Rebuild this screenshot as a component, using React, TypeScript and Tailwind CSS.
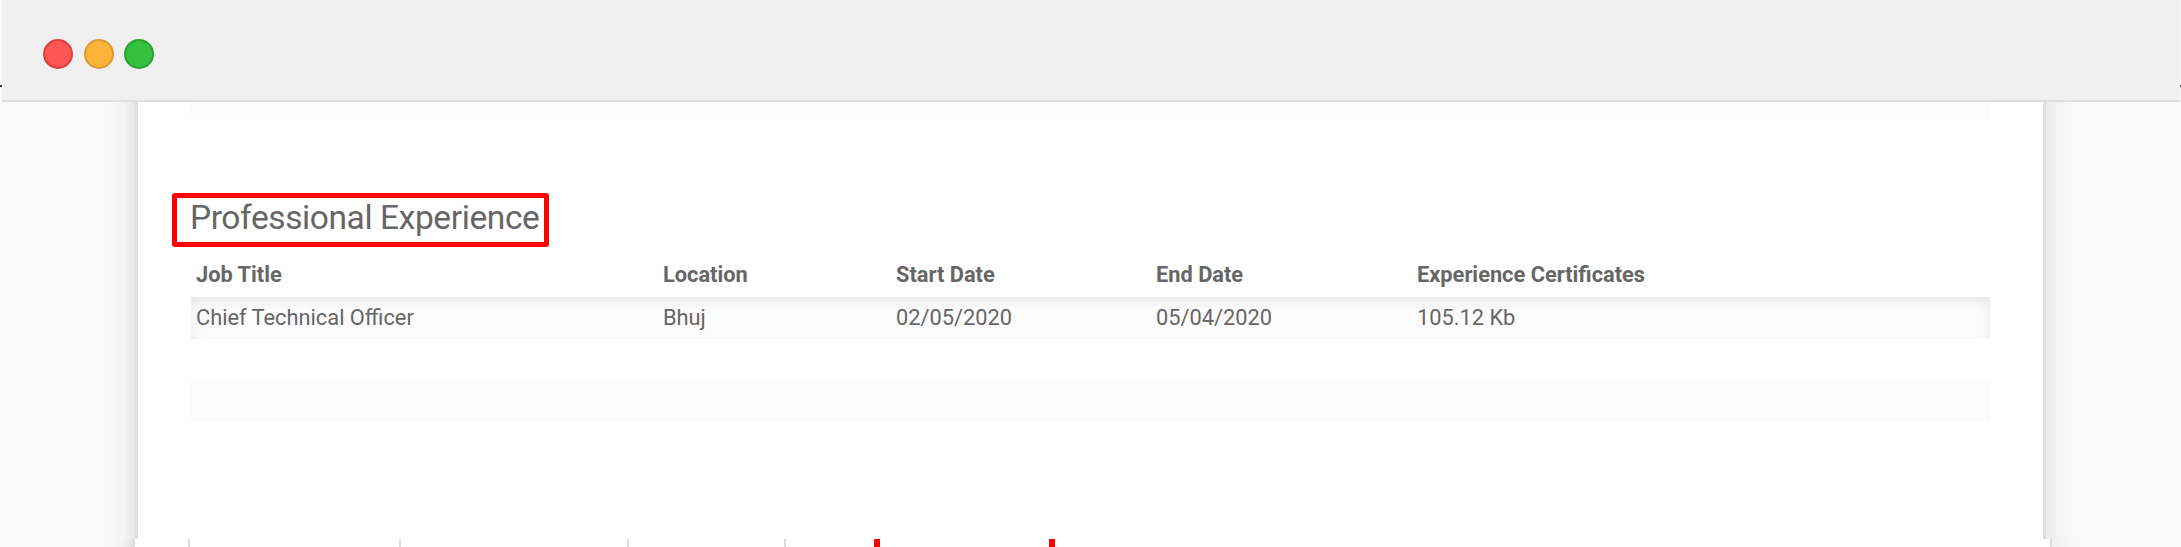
const columns = [
  { title: "Job Title", value: "Chief Technical Officer" },
  { title: "Location", value: "Bhuj" },
  { title: "Start Date", value: "02/05/2020" },
  { title: "End Date", value: "05/04/2020" },
  { title: "Experience Certificates", value: "105.12 Kb" },
];

const grid = "grid grid-cols-[467px_233px_260px_261px_1fr] pl-[5px]";

function WindowBar() {
  return (
    <header className="relative mr-px ml-[2px] flex h-[102px] shrink-0 items-start border-b-2 border-[#dcdede] bg-[#f0f0f0] pt-[39px] pl-[41px]">
      <span className="size-[30px] rounded-full border-2 border-[#e0413f] bg-[#fc5753]" />
      <span className="ml-[11px] size-[30px] rounded-full border-2 border-[#dd9a33] bg-[#fbb437]" />
      <span className="ml-[10px] size-[30px] rounded-full border-2 border-[#27a22b] bg-[#36c041]" />
      <span className="absolute top-[85px] -left-[2px] h-[2px] w-[2px] bg-[#3f2f40]" />
      <span className="absolute top-[85px] -right-px h-[2px] w-px bg-[#555555]" />
    </header>
  );
}

function Experience() {
  return (
    <section className="text-[#666666]">
      <div className="ml-[-19px] flex h-[54px] w-[377px] items-start rounded-[3px] border-[5px] border-[#ff0000] pl-[13px]">
        <h1 className="text-[33.5px] leading-[40px] tracking-[-0.4px] whitespace-nowrap">Professional Experience</h1>
      </div>
      <div className={`${grid} h-[50px] items-center pt-[6px] text-[21.8px] font-bold`}>
        {columns.map((c) => (
          <span key={c.title} className="whitespace-nowrap">{c.title}</span>
        ))}
      </div>
      <div className={`${grid} h-[42px] items-center bg-[#fcfcfc] pt-px text-[21.8px] shadow-[inset_0_5px_14px_-3px_rgba(0,0,0,0.12)]`}>
        {columns.map((c) => (
          <span key={c.title} className="whitespace-nowrap">{c.value}</span>
        ))}
      </div>
      <div className="mt-[41px] h-[42px] bg-[#fcfcfc]" />
    </section>
  );
}

export default function App() {
  return (
    <div className="flex h-[547px] w-[2181px] flex-col overflow-hidden bg-[#f9f9f9] font-['Roboto',sans-serif]">
      <WindowBar />
      <main className="flex h-[437px] shrink-0 overflow-hidden">
        <div className="w-[135px] bg-linear-to-r from-[#f9f9f9] from-80% via-[#f5f5f5] via-92% to-[#e6e6e6]" />
        <div className="w-[1911px] border-r-[3px] border-l-[3px] border-[#dbe0e3] bg-white pr-[53px] pl-[53px]">
          <div className="mb-[74px] h-[17px] bg-[#fcfcfc]" />
          <Experience />
        </div>
        <div className="w-[135px] bg-linear-to-r from-[#ebebeb] via-[#f5f5f5] via-10% to-[#f9f9f9] to-20%" />
      </main>
      <footer className="flex h-[8px] shrink-0">
        <div className="w-[132px] bg-linear-to-r from-[#f9f9f9] from-80% via-[#f5f5f5] via-92% to-[#e6e6e6]" />
        <div className="flex w-[1920px] border-r-2 border-l-[3px] border-[#dbe0e3] bg-white pl-[53px]">
          <span className="w-[2px] bg-[#d6dce0]" />
          <span className="ml-[209px] w-[2px] bg-[#d6dce0]" />
          <span className="ml-[226px] w-[2px] bg-[#d6dce0]" />
          <span className="ml-[155px] w-[2px] bg-[#d6dce0]" />
          <span className="ml-[88px] w-[6px] bg-[#ff0000]" />
          <span className="ml-[169px] w-[6px] bg-[#ff0000]" />
        </div>
        <div className="w-[129px] bg-linear-to-r from-[#f0f0f0] via-[#f6f6f6] via-10% to-[#f9f9f9] to-20%" />
      </footer>
    </div>
  );
}
